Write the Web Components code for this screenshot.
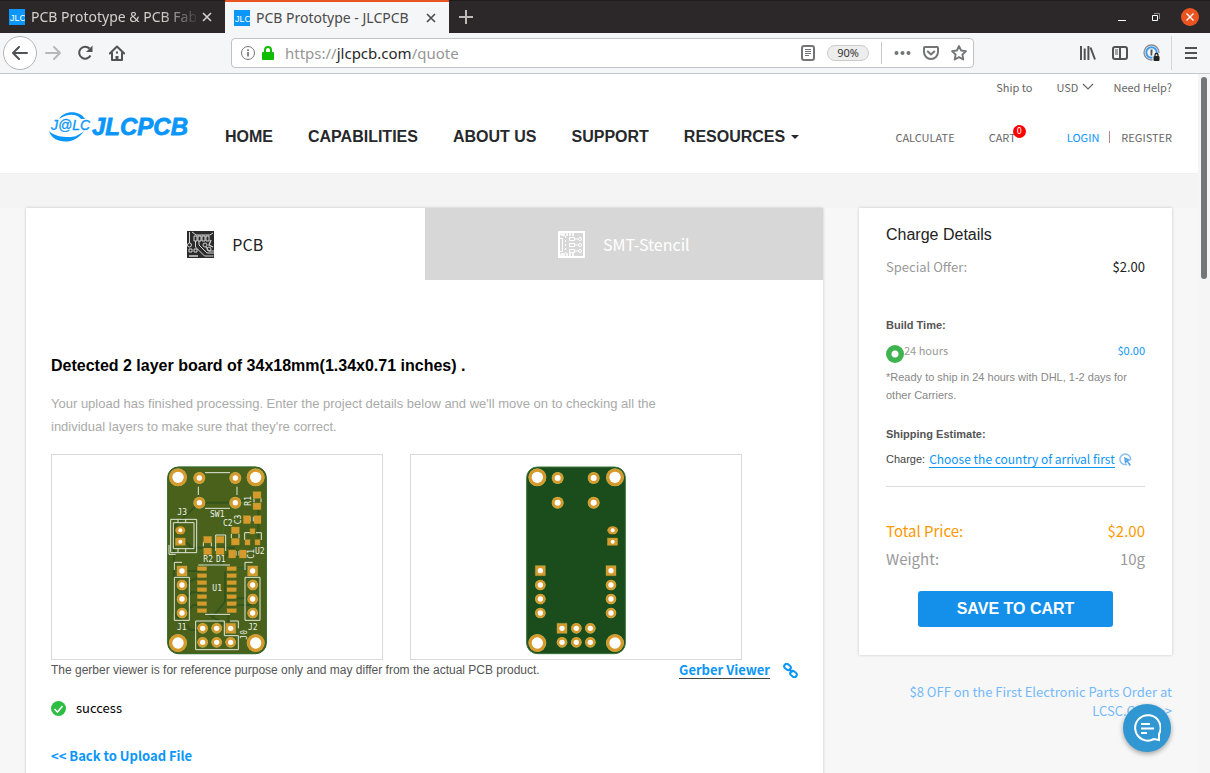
<!DOCTYPE html>
<html lang="en">
<head>
<meta charset="utf-8">
<title>PCB Prototype - JLCPCB</title>
<style>
  :root {
    --source: "Noto Sans CJK SC", sans-serif;
    --arial: "Liberation Sans", Arial, sans-serif;
    --ui: "Noto Sans", sans-serif;
    --blue: #0a96fa;
  }
  body { margin: 0; font-family: var(--arial); background: #f7f7f7; }
</style>
</head>
<body>
<browser-shell>
  <browser-tab slot="tab" fade>PCB Prototype &amp; PCB Fab</browser-tab>
  <browser-tab slot="tab" active>PCB Prototype - JLCPCB</browser-tab>
  <browser-toolbar slot="toolbar"></browser-toolbar>
  <site-header></site-header>
  <quote-layout>
    <upload-result slot="main"></upload-result>
    <charge-panel slot="side"></charge-panel>
  </quote-layout>
  <chat-button slot="overlay"></chat-button>
</browser-shell>

<script>
function define(tag, html) {
  const template = document.createElement('template');
  template.innerHTML = '<style>:host,*{box-sizing:border-box}a{color:inherit;text-decoration:none}button{font:inherit;color:inherit;border:0;background:none;padding:0}svg{display:block;flex:none}</style>' + html;
  customElements.define(tag, class extends HTMLElement {
    constructor() {
      super();
      this.attachShadow({ mode: 'open' }).append(template.content.cloneNode(true));
    }
  });
}

define('browser-shell', `
<style>
  :host { display: flex; flex-direction: column; height: 100vh; overflow: hidden; }
  .strip { display: flex; height: 33px; flex: none; background: #2c2829; border-top: 1px solid #1f1c1d; }
  .add { width: 33px; display: flex; align-items: center; justify-content: center; }
  .win { margin-left: auto; display: flex; align-items: center; gap: 16px; padding-right: 11px; }
  .win button { width: 18px; height: 18px; display: grid; place-items: center; }
  .win .close { background: #e95420; border-radius: 50%; }
  .view { flex: 1; min-height: 0; display: flex; position: relative; }
  .page { flex: 1; min-width: 0; overflow: hidden; background: #f7f7f7; }
  .bar { width: 12px; background: #f5f5f6; padding: 3px; }
  .thumb { height: 202px; border-radius: 3px; background: #747576; }
</style>
<div class="strip">
  <slot name="tab"></slot>
  <button class="add" aria-label="New tab"><svg width="14" height="14" viewBox="0 0 14 14"><path d="M7 0v14M0 7h14" stroke="#bdbbb9" stroke-width="2"/></svg></button>
  <div class="win">
    <button aria-label="Minimize"><svg width="10" height="10"><path d="M1 8.5h8" stroke="#fff"/></svg></button>
    <button aria-label="Restore"><svg width="10" height="10" fill="none"><path d="M1.5 3.5h5v5h-5z" stroke="#fff"/><path d="M3 1.500h5.500v5.500" stroke="#8d8a8a"/></svg></button>
    <button class="close" aria-label="Close"><svg width="8" height="8"><path d="M0.500 0.500l7 7m0-7l-7 7" stroke="#fff" stroke-width="1.400"/></svg></button>
  </div>
</div>
<slot name="toolbar"></slot>
<div class="view">
  <div class="page"><slot></slot></div>
  <div class="bar"><div class="thumb"></div></div>
  <slot name="overlay"></slot>
</div>`);

define('browser-tab', `
<style>
  :host { display: flex; width: 225px; align-items: center; padding: 0 13px 0 9px; color: #d3d1cf; font: 14px/20px var(--ui); }
  :host([active]) { width: 224px; margin-top: -1px; background: #f5f6f7; border-top: 2px solid #e95420; color: #4a4a4b; }
  .label { flex: 1; min-width: 0; margin: 0 6px; white-space: nowrap; overflow: hidden; }
  :host([fade]) .label { -webkit-mask: linear-gradient(90deg, #000 130px, transparent 170px); mask: linear-gradient(90deg, #000 130px, transparent 170px); }
</style>
<svg width="16" height="16"><rect width="16" height="16" fill="#0a96fa"/><text x="1" y="12" font-family="Liberation Sans" font-size="9" fill="#fff">JLC</text></svg>
<span class="label"><slot></slot></span>
<button aria-label="Close tab"><svg width="10" height="10"><path d="M1 1l8 8m0-8l-8 8" stroke="currentColor" stroke-width="1.600"/></svg></button>`);

define('browser-toolbar', `
<style>
  :host { display: flex; flex: none; height: 41px; align-items: center; background: #f5f6f7; border-bottom: 1px solid #c5c8cb; padding: 0 5px 0 3px; color: #515254; font: 15px/20px var(--ui); }
  nav { display: flex; align-items: center; width: 228px; flex: none; }
  nav button, .tools button { width: 32px; height: 32px; display: grid; place-items: center; }
  nav .back { width: 34px; height: 34px; border: 1px solid #b4b5b7; border-radius: 50%; background: #fff; }
  .url { flex: 1; min-width: 0; height: 30px; display: flex; align-items: center; background: #fff; border: 1px solid #bfc2c6; border-radius: 4px; padding: 0 6px 0 8px; }
  .addr { flex: 1; min-width: 0; margin-left: 11px; color: #969696; outline: 0; white-space: nowrap; overflow: hidden; }
  .addr b { font-weight: 400; color: #29292b; }
  .zoom { width: 42px; height: 16px; margin: 0 12px; background: #ededee; border: 1px solid #cbcbcd; border-radius: 8px; font-size: 11px; line-height: 14px; color: #333; text-align: center; }
  .sep { width: 1px; height: 22px; background: #c5c8cb; margin-right: 12px; }
  .marks { display: flex; align-items: center; gap: 12px; color: #737475; }
  .tools { margin-left: 98px; display: flex; align-items: center; }
  .tools .menu { width: 34px; height: 34px; border-left: 1px solid #d3d5d7; padding-left: 4px; margin-left: 3px; }
</style>
<nav aria-label="History">
  <button class="back" aria-label="Back"><svg width="16" height="14" fill="none" stroke="currentColor" stroke-width="2" stroke-linecap="round" stroke-linejoin="round"><path d="M15 7H1m6-6L1 7l6 6"/></svg></button>
  <button aria-label="Forward"><svg width="16" height="14" fill="none" stroke="#b7b8b9" stroke-width="2" stroke-linecap="round" stroke-linejoin="round"><path d="M1 7h14M9 1l6 6-6 6"/></svg></button>
  <button aria-label="Reload"><svg width="16" height="16" fill="none" stroke="currentColor" stroke-width="2"><path d="M13.500 10.500a6 6 0 1 1-1-7"/><path d="M15.500 .5v6.500H9z" fill="currentColor" stroke="none"/></svg></button>
  <button aria-label="Home"><svg width="16" height="16" fill="none" stroke="currentColor" stroke-width="2" stroke-linejoin="round"><path d="M.800 8.500L8 1.500l7.200 7M3 8v7h10V8" stroke-linecap="round"/><path d="M8 15v-4" stroke-width="3"/><path d="M7 6.500h2v2H7z" fill="currentColor" stroke="none"/></svg></button>
</nav>
<div class="url">
  <svg width="16" height="16" fill="none" stroke="#737475"><circle cx="8" cy="8" r="6.500"/><path d="M8 7v4.500M8 4.200v1.800" stroke-width="1.700"/></svg>
  <svg width="12" height="14" style="margin-left:6px"><path d="M3 7V4a3 3 0 0 1 6 0v3" fill="none" stroke="#12bc00" stroke-width="2"/><rect y="6" width="12" height="8" rx="1" fill="#12bc00"/></svg>
  <div class="addr" role="textbox" contenteditable="true" aria-label="Address">https://<b>jlcpcb.com</b>/quote</div>
  <svg width="14" height="16" fill="none" stroke="#737475"><rect x="1" y="1" width="12" height="14" rx="2" stroke-width="2"/><path d="M4 4.500h6M4 6.500h6M4 8.500h6M4 10.500h4"/></svg>
  <button class="zoom">90%</button>
  <span class="sep"></span>
  <span class="marks">
    <svg width="17" height="16" fill="currentColor"><circle cx="2.500" cy="8" r="2"/><circle cx="8.500" cy="8" r="2"/><circle cx="14.500" cy="8" r="2"/></svg>
    <svg width="16" height="16" fill="none" stroke="currentColor" stroke-width="2" stroke-linecap="round" stroke-linejoin="round"><path d="M2 2h12a1 1 0 0 1 1 1v4a7 7 0 0 1-14 0V3a1 1 0 0 1 1-1zM4.800 6.500L8 9.500l3.200-3"/></svg>
    <svg width="16" height="16" fill="none" stroke="currentColor" stroke-width="1.800" stroke-linejoin="round"><path d="M8 1l2.100 4.500 4.900.6-3.600 3.400.9 5L8 12.100 3.700 14.500l.9-5L1 6.100l4.900-.6z"/></svg>
  </span>
</div>
<div class="tools">
  <button aria-label="Library"><svg width="16" height="14" stroke="currentColor" stroke-width="2"><path d="M1 0v14M4.700 2.500V14M8.400 0v14M10.500 1.500l4.500 12" fill="none"/></svg></button>
  <button aria-label="Sidebars"><svg width="16" height="14" fill="none" stroke="currentColor"><rect x="1" y="1" width="14" height="12" rx="2" stroke-width="2"/><path d="M8 1v12" stroke-width="2"/><path d="M3 4h3M3 6h3M3 8h3"/></svg></button>
  <button aria-label="Password manager"><svg width="18" height="18" fill="none"><circle cx="8.500" cy="8.500" r="7.500" stroke="#8b8d90" stroke-width="1.300"/><circle cx="8.500" cy="8.500" r="5.200" stroke="#3f9cf0" stroke-width="2"/><path d="M8.500 5.500v6" stroke="#555" stroke-width="2"/><path d="M9.500 9h8v9h-8z" fill="#f5f6f7"/><rect x="10.500" y="12" width="6" height="5" rx="1" fill="#222"/><path d="M12 12v-1a1.500 1.500 0 0 1 3 0v1" stroke="#222" stroke-width="1.300"/></svg></button>
  <button class="menu" aria-label="Menu"><svg width="12" height="12"><path d="M0 1h12M0 6h12M0 11h12" stroke="currentColor" stroke-width="2"/></svg></button>
</div>`);

define('nav-link', `
<style>
  :host { display: block; font: bold 16px/20px var(--arial); color: #26282b; white-space: nowrap; }
  a { display: flex; align-items: center; }
  svg { display: none; margin-left: 6px; }
  :host([menu]) svg { display: block; }
</style>
<a href="#"><slot></slot><svg width="8" height="4"><path d="M0 0h8L4 4z" fill="currentColor"/></svg></a>`);

define('site-header', `
<style>
  :host { display: block; background: #fff; border-bottom: 1px solid #f0f0f0; padding: 5px 26px 26px 50px; font: 11px/16px var(--source); color: #666; }
  .util { display: flex; justify-content: flex-end; align-items: center; margin-bottom: 16px; }
  .cur { display: flex; align-items: center; margin: 0 19px 0 24px; }
  select { appearance: none; border: 0; background: none; padding: 0; margin: 0; width: 26px; height: 16px; font: inherit; color: inherit; }
  .row { display: flex; align-items: flex-end; height: 36px; line-height: 20px; }
  .logo { margin-right: 35px; padding-bottom: 4px; }
  .logo svg { overflow: visible; }
  nav { display: flex; gap: 35px; }
  .acct { display: flex; margin-left: auto; white-space: nowrap; }
  .cart { position: relative; margin: 0 51px 0 34px; }
  .badge { position: absolute; left: 24px; top: -2px; width: 13px; height: 13px; border-radius: 50%; background: #f00; color: #fff; font-size: 9px; line-height: 12px; text-align: center; }
  .login { color: var(--blue); }
  .sep { width: 1px; height: 12px; margin: 4px 11px 0 10px; background: #b08a90; }
</style>
<div class="util">
  <a href="#">Ship to</a>
  <label class="cur"><select aria-label="Currency"><option>USD</option></select><svg width="12" height="8" fill="none"><path d="M1 1l5 5 5-5" stroke="#666" stroke-width="1.200"/></svg></label>
  <a href="#">Need Help?</a>
</div>
<div class="row">
  <a class="logo" href="#" aria-label="JLCPCB home"><svg width="140" height="32" viewBox="0 0 140 32" fill="#0a96fa">
    <path d="M9 8C14-1 30-1 35 8l-4 0C26 2 17 3 9 8z"/><path d="M-1 20c3 12 25 16 35 0-6 5-10 6-15 6-7 0-15-1-20-6z"/>
    <text x="1" y="19" font-family="Liberation Sans" font-size="14" font-style="italic" stroke="#0a96fa" stroke-width="0.300">J@LC</text>
    <text x="42" y="24" font-family="Liberation Sans" font-size="24" font-style="italic" font-weight="700" stroke="#0a96fa" stroke-width="0.800">JLCPCB</text></svg></a>
  <nav><nav-link>HOME</nav-link><nav-link>CAPABILITIES</nav-link><nav-link>ABOUT US</nav-link><nav-link>SUPPORT</nav-link><nav-link menu>RESOURCES</nav-link></nav>
  <div class="acct"><a href="#">CALCULATE</a><a class="cart" href="#">CART<span class="badge">0</span></a><a class="login" href="#">LOGIN</a><span class="sep"></span><a href="#">REGISTER</a></div>
</div>`);

define('quote-layout', `
<style>
  :host { display: flex; align-items: flex-start; gap: 36px; padding: 34px 26px 0; background: linear-gradient(#f4f4f4 34px, #f7f7f7 34px); }
  .main { flex: 1; min-width: 0; }
  .side { width: 313px; flex: none; }
</style>
<div class="main"><slot name="main"></slot></div>
<div class="side"><slot name="side"></slot></div>`);

define('quote-tab', `
<style>
  :host { display: block; flex: 1; }
  button { width: 100%; height: 72px; display: flex; align-items: center; justify-content: center; gap: 18px; background: #d7d7d7; color: #fff; font: 16px/24px var(--source); }
  :host([active]) button { background: #fff; color: #222; }
</style>
<button role="tab"><slot name="icon"></slot><slot></slot></button>`);

const ring = (x, y, r, hole) => `<circle cx="${x}" cy="${y}" r="${r + 1}" fill="#b9b65a"/><circle cx="${x}" cy="${y}" r="${r}" fill="#d69a2c"/><circle cx="${x}" cy="${y}" r="${hole}" fill="#fff"/>`;
const square = (x, y) => `<path d="M${x - 15} ${y - 15}h30v30h-30z" fill="#d69a2c" stroke="#b9b65a"/><circle cx="${x}" cy="${y}" r="8" fill="#fff"/>`;
const pad = (x, y, w, h) => `<rect x="${x}" y="${y}" width="${w}" height="${h}" fill="#d69a2c" stroke="#a8962f"/>`;
const label = (x, y, t, turn) => `<text x="${x}" y="${y}"${turn ? ` transform="rotate(-90 ${x} ${y})"` : ''}>${t}</text>`;

function boardFront() {
  let s = '<svg width="104" height="204" viewBox="45 0 312 612" role="img" aria-label="Board front">';
  s += '<rect x="53" y="36" width="296" height="560" rx="32" fill="#49611b" stroke="#2f5c20" stroke-width="3"/>';
  s += '<g fill="none" stroke="#33551c" stroke-width="6"><path d="M148 143L72 215v260l50 50h30M148 143h110l62-20M325 150v100M95 260h12l18 18h130M96 348h50l20-10M250 340h50M105 390l40-25M105 432l20-20h30M105 475l25-25h30M250 430h55M250 450h55M172 475l70 45M225 350v90l-40 50M235 480v60M72 380v90M160 330h50l30-45"/></g>';
  s += '<g fill="none" stroke="#3b7a30" stroke-width="2"><path d="M84 36h234M53 68v496M349 68v496M84 596h234M240 190l-20 30v40M260 340h60M120 320l40-40"/></g>';
  s += '<g fill="none" stroke="#e4e8da" stroke-width="3"><path d="M165 53h75M165 160h75M145 95v25M261 95v25M62 193h78v100H62zM70 203h62v78H70zM84 193v10M107 193v10M84 281v12M107 281v12M57 270v28h20M197 240v48M227 240v48M197 240h30M160 260v14M184 260v14M244 237v12M267 237v12M301 185v14M310 185v14M312 130v12M333 130v12M258 288v14M267 288v14M300 233h-16v22M318 233h16v22M73 345v-23h23M285 345v-23h23M73 367h45v129H73zM285 367h45v129h-45zM145 330h95M165 478h75M240 498h25v22M137 498h86v44h42v42H137z"/></g>';
  for (const [x, y] of [[84, 67], [317, 67], [84, 564], [317, 564]]) s += ring(x, y, 26, 17);
  for (const [x, y] of [[148, 69], [256, 69], [148, 143], [256, 143]]) s += ring(x, y, 17, 8);
  for (const y of [390, 432, 474]) s += ring(96, y, 15, 8) + ring(308, y, 15, 8);
  s += square(96, 348) + square(308, 348) + square(242, 520);
  for (const [x, y] of [[158, 520], [200, 520], [158, 562], [200, 562], [242, 562]]) s += ring(x, y, 15, 8);
  s += '<ellipse cx="91" cy="226" rx="15" ry="12" fill="#d69a2c"/><circle cx="91" cy="226" r="6" fill="#fff"/>' + pad(76, 249, 30, 22) + '<circle cx="91" cy="260" r="6" fill="#fff"/>';
  for (let i = 0; i < 7; i++) s += pad(142, 335 + i * 21, 28, 12) + pad(231, 335 + i * 21, 28, 12);
  for (const [x, y] of [[161, 244], [161, 279], [198, 244], [198, 279], [244, 216], [244, 250], [309, 110], [309, 144]]) s += pad(x, y, 24, 20);
  for (const [x, y] of [[280, 182], [312, 182], [236, 285], [268, 285]]) s += pad(x, y, 21, 24);
  s += pad(300, 221, 15, 16) + pad(285, 254, 15, 16) + pad(315, 254, 15, 16);
  s += '<g fill="#eef0e6" font-family="DejaVu Sans Mono" font-size="24">' + label(180, 186, 'SW1') + label(82, 181, 'J3') + label(219, 213, 'C2') + label(160, 321, 'R2') + label(198, 321, 'D1') + label(315, 297, 'U2') + label(187, 409, 'U1') + label(81, 525, 'J1') + label(294, 525, 'J2') + label(302, 152, 'R1', 1) + label(274, 208, 'C3', 1) + label(312, 311, 'C1', 1) + label(291, 554, 'J0', 1) + '</g>';
  return s + '</svg>';
}
function boardBack() {
  let s = '<svg width="104" height="204" viewBox="42 0 312 612" role="img" aria-label="Board back"><rect x="50" y="36" width="296" height="560" rx="32" fill="#1b4c1c" stroke="#3a7438" stroke-width="3"/>';
  for (const [x, y] of [[82, 67], [315, 67], [82, 564], [315, 564]]) s += ring(x, y, 26, 17);
  for (const [x, y] of [[143, 69], [251, 69], [143, 143], [251, 143]]) s += ring(x, y, 17, 9);
  for (const y of [390, 432, 474]) s += ring(91, y, 15, 8) + ring(303, y, 15, 8);
  s += square(91, 347) + square(303, 347) + square(156, 520);
  for (const [x, y] of [[199, 520], [241, 520], [156, 562], [199, 562], [241, 562]]) s += ring(x, y, 15, 8);
  return s + '<ellipse cx="308" cy="226" rx="16" ry="12" fill="#d69a2c"/><circle cx="308" cy="226" r="6" fill="#fff"/>' + pad(292, 249, 31, 22) + '<circle cx="308" cy="260" r="6" fill="#fff"/></svg>';
}

define('upload-result', `
<style>
  :host { display: block; background: #fff; box-shadow: 0 0 3px rgba(0,0,0,.2); }
  .tabs { display: flex; }
  .body { padding: 75px 25px 80px; }
  h1 { margin: 0 0 15px; font: bold 16px/22px var(--arial); color: #000; }
  p { margin: 0 0 16px; max-width: 640px; font-size: 13px; line-height: 23px; color: #aaa; }
  .boards { display: flex; gap: 27px; }
  .board { width: 332px; border: 1px solid #d9d9d9; display: flex; justify-content: center; }
  .note { display: flex; align-items: center; font-size: 12px; line-height: 20px; color: #555; margin-bottom: 18px; }
  .note a { margin-left: auto; margin-right: 13px; font: bold 13px/16px var(--source); color: var(--blue); border-bottom: 1px solid #444; }
  .ok { display: flex; align-items: center; gap: 10px; font: 13px/20px var(--source); color: #000; margin-bottom: 28px; }
  .back { display: block; font: bold 13px/20px var(--source); color: var(--blue); }
</style>
<div class="tabs" role="tablist">
  <quote-tab active>PCB<svg slot="icon" width="27" height="27" viewBox="0 0 27 27" fill="none" stroke="#d5d5d5"><path d="M0 0h27v27H0z" fill="#2b2b2b" stroke="none"/><path d="M2.500 1v11M5 1l4 3h14l3-2M7 5v5h3V5zM11 5v5h3V5zM15 5v5h3V5zM19 5v5h3V5zM8.500 10v6l9 9h9M12 10v4l8 8h7M2 18h3v3H2zM7 18h3v3H7zM27 20h-5l-3-4"/><circle cx="2.500" cy="14" r="2"/><circle cx="18" cy="14" r="2"/><circle cx="22" cy="18" r="2"/><path d="M24 9l-2 5 4 2M2 25h9" stroke-width="1.300"/></svg></quote-tab>
  <quote-tab>SMT-Stencil<svg slot="icon" width="27" height="27" viewBox="0 0 27 27" fill="none" stroke="#fff"><path d="M1 1h25v25H1z" stroke-width="2"/><path d="M2 3h2v2M6 2v3M9 2v3M12 2v3M15 2v3M2 24h2v-2M6 25v-3M9 25v-3M12 25v-3M15 25v-3" stroke-width="1.600"/><path d="M1.500 7.500h3v13h-3zM11.500 6.500h5v3h-5zM11.500 12.500h5v3h-5zM11.500 18.500h5v3h-5zM17 8h4M17 14h4M17 20h4"/><path d="M7.500 5v17" stroke-dasharray="2 2"/><circle cx="22" cy="8" r="1.500"/><circle cx="22" cy="14" r="1.500"/><circle cx="22" cy="20" r="1.500"/></svg></quote-tab>
</div>
<div class="body">
  <h1>Detected 2 layer board of 34x18mm(1.34x0.71 inches) .</h1>
  <p>Your upload has finished processing. Enter the project details below and we'll move on to checking all the individual layers to make sure that they're correct.</p>
  <div class="boards"><div class="board">${boardFront()}</div><div class="board">${boardBack()}</div></div>
  <div class="note"><span>The gerber viewer is for reference purpose only and may differ from the actual PCB product.</span><a href="#">Gerber Viewer</a>
    <svg width="15" height="15" fill="none" stroke="#0a96fa" stroke-width="2"><rect x="1" y="1.500" width="7" height="5" rx="2.500" transform="rotate(40 4.500 4)"/><rect x="7" y="8.500" width="7" height="5" rx="2.500" transform="rotate(40 10.500 11)"/><path d="M6 6l3.500 3.500"/></svg></div>
  <div class="ok"><svg width="15" height="15"><circle cx="7.500" cy="7.500" r="7.500" fill="#2dbd43"/><path d="M3.500 8l3 3 5-6" fill="none" stroke="#fff" stroke-width="1.600"/></svg><span>success</span></div>
  <a class="back" href="#">&lt;&lt; Back to Upload File</a>
</div>`);

define('charge-row', `
<style>
  :host { display: flex; justify-content: space-between; align-items: center; }
</style><slot></slot><slot name="value"></slot>`);

define('charge-panel', `
<style>
  :host { display: block; font-family: var(--source); }
  section { background: #fff; box-shadow: 0 0 3px rgba(0,0,0,.2); padding: 17px 27px 28px; }
  h2 { margin: 0 0 12px; font: 16px/20px var(--arial); color: #222; }
  h3 { margin: 0; font: bold 11px/18px var(--arial); color: #555; }
  .offer { font-size: 13px; line-height: 20px; color: #999; margin-bottom: 39px; }
  .offer [slot] { color: #222; }
  .time { font-size: 11px; line-height: 18px; color: #999; margin-top: 7px; align-items: flex-start; }
  .time [slot] { color: var(--blue); }
  label { display: flex; }
  input { appearance: none; width: 18px; height: 18px; margin: 4px 0 0; border-radius: 50%; background: radial-gradient(#fff 3px, #3fb34f 4px); }
  .ready { margin: 5px 0 21px; font: 11px/18px var(--arial); color: #888; }
  .ship { display: flex; align-items: center; font: 11px/18px var(--arial); color: #444; margin-top: 7px; height: 18px; white-space: nowrap; }
  .ship a { font: 12px/16px var(--source); color: var(--blue); border-bottom: 1px solid var(--blue); margin: 0 4px; }
  hr { border: 0; height: 1px; background: #ddd; margin: 18px 0 30px; }
  .sum { font-size: 15px; line-height: 28px; color: #999; }
  .total { color: #ff9800; }
  button { display: block; width: 195px; height: 36px; margin: 18px auto 0; border-radius: 3px; background: #148fea; color: #fff; font: bold 16px/36px var(--arial); }
  .promo { margin-top: 27px; text-align: right; font-size: 13px; line-height: 19px; color: #74b9fb; display: block; }
</style>
<section>
  <h2>Charge Details</h2>
  <charge-row class="offer"><span>Special Offer:</span><span slot="value">$2.00</span></charge-row>
  <h3>Build Time:</h3>
  <charge-row class="time"><label><input type="radio" name="build" checked>24 hours</label><span slot="value">$0.00</span></charge-row>
  <div class="ready">*Ready to ship in 24 hours with DHL, 1-2 days for other Carriers.</div>
  <h3>Shipping Estimate:</h3>
  <div class="ship">Charge: <a href="#">Choose the country of arrival first</a><svg width="13" height="13" fill="none"><path d="M8 11.300A5.300 5.300 0 1 1 11.500 7" stroke="#8fc0ee" stroke-width="1.500"/><path d="M5 4l7 3-3 1 3 4-1.500 1-2.500-4-2 2z" fill="#5ba5ea"/></svg></div>
  <hr>
  <charge-row class="sum total"><span>Total Price:</span><span slot="value">$2.00</span></charge-row>
  <charge-row class="sum"><span>Weight:</span><span slot="value">10g</span></charge-row>
  <button>SAVE TO CART</button>
</section>
<a class="promo" href="#">$8 OFF on the First Electronic Parts Order at LCSC.COM &gt;&gt;</a>`);

define('chat-button', `
<style>
  :host { position: absolute; right: 39px; bottom: 21px; }
  button { width: 48px; height: 48px; border-radius: 50%; background: #3197d3; display: grid; place-items: center; box-shadow: 0 2px 5px rgba(0,0,0,.35); }
</style>
<button aria-label="Chat"><svg width="28" height="28" fill="none" stroke="#fff" stroke-width="2"><path d="M26 20a12.700 12.700 0 1 0-5 5l5 1z"/><path d="M8 10h9M8 14.500h13M8 19h6"/></svg></button>`);
</script>
</body>
</html>
